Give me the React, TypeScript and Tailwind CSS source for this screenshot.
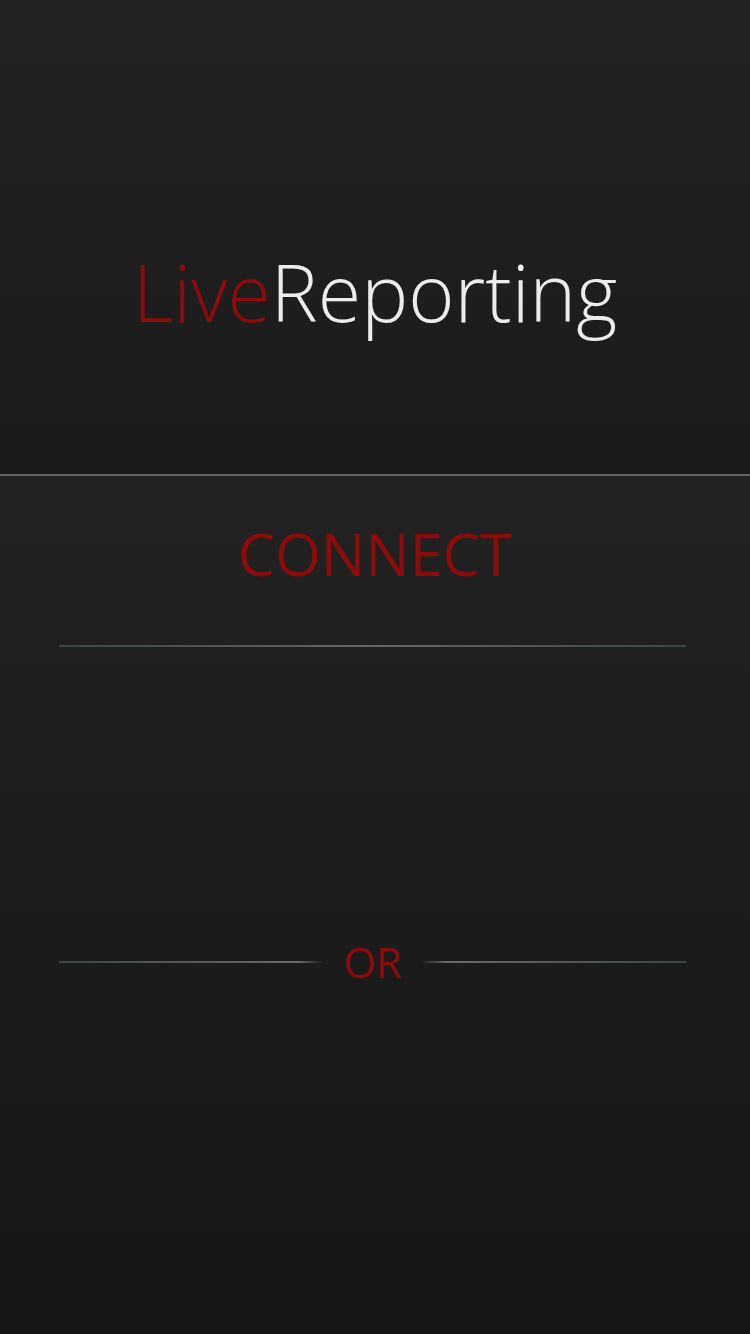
import React from 'react';

export default function App() {
  return (
    <div className="flex h-[1334px] w-[750px] flex-col overflow-hidden bg-[#1b1b1b]">
      {/* logo header */}
      <div className="flex h-[474px] items-center justify-center bg-gradient-to-b from-[#222222] to-[#1b1b1b] pt-[108px]">
        <h1 className="font-['Open_Sans',sans-serif] text-[79px] font-light leading-none tracking-[0px]">
          <span className="text-[#8c0b0b]">Live</span>
          <span className="text-[#ececec]">Reporting</span>
        </h1>
      </div>
      <div className="h-[2px] bg-[#666666]" />

      {/* connect panel */}
      <div className="flex flex-1 flex-col bg-gradient-to-b from-[#222222] to-[#161616]">
        <div className="flex h-[169px] items-center justify-center pb-[14px]">
          <span className="font-['Open_Sans',sans-serif] text-[59px] font-normal leading-none text-[#8c0b0b]">
            CONNECT
          </span>
        </div>
        <div className="ml-[59px] mr-[64px] h-[2px] bg-gradient-to-r from-[#3c4648] via-[#666666] to-[#3c4648]" />

        <div className="h-[294px]" />

        <div className="ml-[59px] mr-[64px] flex items-center gap-[19px]">
          <div className="h-[2px] flex-1 bg-gradient-to-r from-[#3c4648] via-[#6a6a6a] via-90% to-transparent" />
          <span className="font-['Open_Sans',sans-serif] text-[42px] leading-none text-[#8c0b0b]">
            OR
          </span>
          <div className="h-[2px] flex-1 bg-gradient-to-l from-[#3c4648] via-[#6a6a6a] via-90% to-transparent" />
        </div>
      </div>
    </div>
  );
}
